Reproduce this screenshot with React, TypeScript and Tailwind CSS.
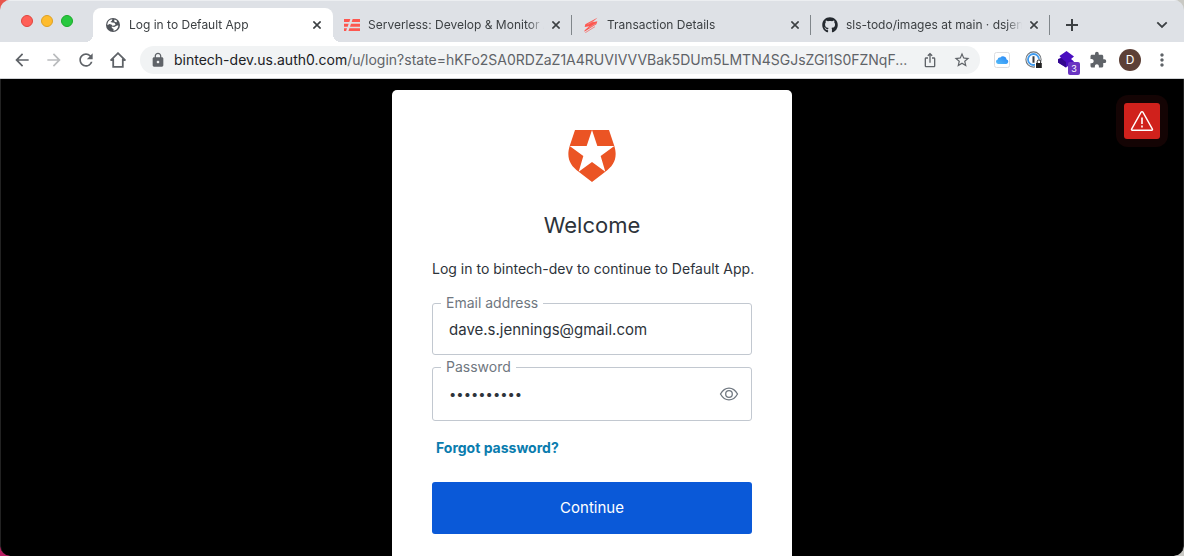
import type { ReactNode } from "react";
import { FaGithub } from "react-icons/fa";
import { MdArrowBack, MdArrowForward, MdRefresh, MdLock, MdExtension, MdMoreVert, MdIosShare, MdStarBorder } from "react-icons/md";

function GlobeIcon() {
  return (
    <svg viewBox="0 0 16 16" className="size-4 shrink-0" aria-hidden="true">
      <circle cx="8" cy="8" r="7" fill="#50545a" />
      <path d="M2.400 8.300C2.200 6 3.200 3.800 5.200 2.700l2.200-.5-.5 1.600L5.400 5l1.800.6 2.200.2 1.200 1.700-1.200 1.100-2 .1-1-1.300-2-.3zM9.600 2.600l2.400 1.100-.3 1.600-1.700-.4-.9-1zM6.600 9.600l2.600.5 2.800-1.500 1.400-.2c-.1 2.100-1.600 4.200-3.600 5l-1.400.3.2-1.700-1.700-.9z" fill="#fff" />
    </svg>
  );
}

function ServerlessIcon() {
  return (
    <svg viewBox="0 0 48 38" className="w-4 shrink-0" fill="#fd5750" aria-hidden="true">
      <path d="M0 0h19l-3 9H0zM26 0h22v9H23zM0 14h14l-3 9H0zM21 14h27v9H18zM0 28h9l-3 9H0zM16 28h32v9H13z" />
    </svg>
  );
}

function BoltIcon() {
  return (
    <svg viewBox="0 0 48 48" className="size-4 shrink-0" fill="#fd5750" aria-hidden="true">
      <path d="M43 2 7 22l-2 8 14-2L5 40l-1 4 36-22 3-9-14 3z" />
      <path d="M7 47 36 29" stroke="#fd5750" strokeWidth="2" />
      <path d="M14 22 38 9M18 32l20-12" stroke="#dee1e6" strokeWidth="1" />
    </svg>
  );
}

function CloseIcon() {
  return (
    <svg viewBox="0 0 8 8" className="size-2" stroke="#3c4043" strokeWidth="1.6" aria-hidden="true">
      <path d="m.4.4 7.2 7.2M7.6.4.4 7.6" />
    </svg>
  );
}

function HomeIcon() {
  return (
    <svg viewBox="0 0 16 16" className="size-4" fill="none" stroke="#5f6368" strokeWidth="1.8" aria-hidden="true">
      <path d="M.9 8.2 8 1.2l7.1 7M3.2 6.8v8.1h9.6V6.8" strokeLinejoin="miter" />
      <path d="M.4 8.3h2.8M12.8 8.3h2.8" strokeWidth="1.4" />
    </svg>
  );
}

function CloudIcon() {
  return (
    <svg viewBox="0 0 16 16" className="size-4" aria-hidden="true">
      <defs>
        <linearGradient id="cloud" x1="0" x2="1" y1="1" y2="0">
          <stop offset="0" stopColor="#56bdf9" />
          <stop offset="1" stopColor="#2584f5" />
        </linearGradient>
      </defs>
      <rect x=".5" y=".5" width="15" height="15" rx="2" fill="#fff" stroke="#dcdde0" />
      <path d="M4 12a2.300 2.300 0 0 1-.3-4.500 2.100 2.100 0 0 1 2.600-1.900 3.600 3.600 0 0 1 6.300 1.900A2.300 2.300 0 0 1 12.300 12z" fill="url(#cloud)" />
    </svg>
  );
}

function OnePasswordIcon() {
  return (
    <svg viewBox="0 0 18 18" className="size-[18px]" aria-hidden="true">
      <circle cx="8.5" cy="8.5" r="7.6" fill="#fff" stroke="#70757a" strokeWidth="1.1" />
      <circle cx="8.5" cy="8.5" r="5.5" fill="none" stroke="#3f9bef" strokeWidth="1.8" />
      <path d="M8.5 5.3v6.4" stroke="#3a3d42" strokeWidth="2" />
      <path d="M10 10.8h.6V10a2.3 2.3 0 0 1 4.6 0v.8h2V18H10z" fill="#fff" />
      <path d="M11 12h5.8v5H11z" fill="#222" />
      <path d="M12.2 12.2v-1.6a1.7 1.7 0 0 1 3.4 0v1.6" fill="none" stroke="#222" />
    </svg>
  );
}

function LayersIcon() {
  return (
    <svg viewBox="0 0 18 18" className="size-[18px]" aria-hidden="true">
      <path d="m9.500 0 7.500 5.500-3 2.500 3 2.500L9 16.500 1 11.500V8l3-1-1.500-2z" fill="#4a0fc0" />
      <path d="M1 8.500 4 7l5 4v5.500l-8-5z" fill="#33078f" />
    </svg>
  );
}

function ShieldLogo() {
  return (
    <svg viewBox="0 0 144 156" className="w-12" role="img" aria-label="bintech-dev">
      <path d="M21 0h102l16 48c11 36-2 60-27 77l-40 31-40-31C7 108-6 84 5 48z" fill="#eb5424" />
      <path d="m72 0 16 48h51L98 78l14 47-40-29-40 29 14-47L5 48h51z" fill="#fff" />
    </svg>
  );
}

function EyeIcon() {
  return (
    <svg viewBox="0 0 20 16" className="w-5" fill="none" stroke="#6f7780" strokeWidth="1.3" aria-hidden="true">
      <path d="M1.5 8C3.6 4.2 6.5 2.1 10 2.1S16.400 4.200 18.500 8c-2.100 3.800-5 5.900-8.500 5.900S3.600 11.800 1.500 8z" />
      <circle cx="10" cy="8" r="3.3" />
    </svg>
  );
}

function WarningIcon() {
  return (
    <svg viewBox="0 0 24 24" className="size-6" fill="none" stroke="#fff" strokeWidth="1.4" aria-hidden="true">
      <path d="M11.100 3.200 1.600 20.100c-.3.600 0 1.200.7 1.200h19.400c.7 0 1-.6.700-1.200L12.900 3.200c-.4-.7-1.400-.7-1.800 0z" />
      <path d="M12 8.500v6.500M12 16.600v1.800" strokeWidth="1.600" />
    </svg>
  );
}

type TabProps = { title: string; icon: ReactNode; active?: boolean };

function Tab({ title, icon, active }: TabProps) {
  return (
    <div
      className={
        active
          ? "relative flex min-w-0 flex-1 items-center rounded-t-lg bg-white pr-3 pl-3 before:absolute before:bottom-0 before:-left-2 before:size-2 before:bg-[radial-gradient(circle_at_0_0,transparent_8px,white_8px)] after:absolute after:-right-2 after:bottom-0 after:size-2 after:bg-[radial-gradient(circle_at_100%_0,transparent_8px,white_8px)]"
          : "flex min-w-0 flex-1 items-center px-[11px]"
      }
    >
      <button type="button" role="tab" aria-selected={!!active} className="flex min-w-0 flex-1 items-center gap-2 text-left text-xs text-[#3c4043]">
        {icon}
        <span className="min-w-0 flex-1 overflow-hidden whitespace-nowrap [mask-image:linear-gradient(to_right,black_calc(100%-16px),transparent)]">{title}</span>
      </button>
      <button type="button" aria-label={`Close ${title}`} className="flex w-4 shrink-0 items-center justify-end">
        <CloseIcon />
      </button>
    </div>
  );
}

function Divider() {
  return <div className="h-5 w-px shrink-0 self-center bg-[#80868b]" />;
}

function ToolButton({ label, children }: { label: string; children: ReactNode }) {
  return (
    <button type="button" aria-label={label} className="flex h-7 w-8 shrink-0 items-center justify-center text-[#5f6368]">
      {children}
    </button>
  );
}

function BrowserChrome() {
  return (
    <header className="shrink-0">
      <div className="flex h-[42px] items-stretch border-t border-[#eceef1] bg-[#dee1e6] pt-[7px]">
        <div className="flex w-[93px] shrink-0 items-start gap-2 pt-[7px] pl-[21px]">
          <button type="button" aria-label="Close window" className="size-3 rounded-full border border-[#e0443e] bg-[#ff5f57]" />
          <button type="button" aria-label="Minimise window" className="size-3 rounded-full border border-[#dea123] bg-[#febc2e]" />
          <button type="button" aria-label="Zoom window" className="size-3 rounded-full border border-[#1aab29] bg-[#28c840]" />
        </div>
        <div role="tablist" className="flex max-w-[957px] min-w-0 flex-1">
          <Tab active title="Log in to Default App" icon={<GlobeIcon />} />
          <Tab title="Serverless: Develop & Monitor A" icon={<ServerlessIcon />} />
          <Divider />
          <Tab title="Transaction Details" icon={<BoltIcon />} />
          <Divider />
          <Tab title="sls-todo/images at main · dsjen" icon={<FaGithub className="size-4 shrink-0 text-[#24292f]" />} />
          <Divider />
        </div>
        <button type="button" aria-label="New tab" className="ml-2 flex w-7 shrink-0 items-center justify-center">
          <svg viewBox="0 0 12 12" className="size-3" stroke="#3c4043" strokeWidth="2" aria-hidden="true">
            <path d="M6 0v12M0 6h12" />
          </svg>
        </button>
        <button type="button" aria-label="Search tabs" className="mr-2 ml-auto flex w-7 shrink-0 items-center justify-center">
          <svg viewBox="0 0 12 8" className="w-3" fill="none" stroke="#3c4043" strokeWidth="1.8" aria-hidden="true">
            <path d="m1.300 1.300 4.700 4.700 4.700-4.700" />
          </svg>
        </button>
      </div>
      <div className="flex h-[37px] items-center border-b border-[#d0d2d5] bg-white px-[6px]">
        <ToolButton label="Back"><MdArrowBack className="size-5" /></ToolButton>
        <ToolButton label="Forward"><MdArrowForward className="size-5 text-[#babcbe]" /></ToolButton>
        <ToolButton label="Reload"><MdRefresh className="size-5" /></ToolButton>
        <ToolButton label="Home"><HomeIcon /></ToolButton>
        <div className="mx-[6px] flex h-7 min-w-0 flex-1 items-center rounded-full bg-[#f1f3f4] pr-[2px] pl-[10px]">
          <MdLock className="size-4 shrink-0 text-[#5f6368]" />
          <div className="ml-2 min-w-0 flex-1 truncate text-sm text-[#5f6368]">
            <span className="text-[#202124]">bintech-dev.us.auth0.com</span>/u/login?state=hKFo2SA0RDZaZ1A4RUVIVVVBak5DUm5LMTN4SGJsZGl1S0FZNqF...
          </div>
          <div className="flex">
            <ToolButton label="Share"><MdIosShare className="size-4" /></ToolButton>
            <ToolButton label="Bookmark"><MdStarBorder className="size-[18px]" /></ToolButton>
          </div>
        </div>
        <ToolButton label="iCloud"><CloudIcon /></ToolButton>
        <ToolButton label="1Password"><OnePasswordIcon /></ToolButton>
        <div className="relative">
          <ToolButton label="Layers"><LayersIcon /></ToolButton>
          <span className="absolute right-[2px] -bottom-px flex h-[13px] w-3 items-center justify-center rounded-[2px] bg-[#6a35c2] text-[9px] leading-none text-white">3</span>
        </div>
        <ToolButton label="Extensions"><MdExtension className="size-[18px]" /></ToolButton>
        <ToolButton label="Profile">
          <span className="flex size-[22px] items-center justify-center rounded-full bg-[#5d4037] text-xs leading-none text-white">D</span>
        </ToolButton>
        <ToolButton label="Menu"><MdMoreVert className="size-5" /></ToolButton>
      </div>
    </header>
  );
}

function LoginCard() {
  return (
    <section className="w-[400px] max-w-full shrink-0 rounded-[5px] bg-white px-10 pt-10 pb-10 text-[#2d333a]">
      <div className="flex justify-center"><ShieldLogo /></div>
      <h1 className="mt-[25px] text-center text-[22px] leading-9">Welcome</h1>
      <p className="mt-4 text-center text-sm leading-5 whitespace-nowrap">Log in to bintech-dev to continue to Default App.</p>
      <form className="mt-6" onSubmit={(e) => e.preventDefault()}>
        <div className="relative">
          <label htmlFor="email" className="absolute -top-[10px] left-[9px] bg-white px-[5px] text-sm leading-5 text-[#6f7780]">Email address</label>
          <input id="email" type="email" defaultValue="dave.s.jennings@gmail.com" className="h-13 w-full rounded-[3px] border border-[#c2c8d0] px-4 text-[15px] outline-none" />
        </div>
        <div className="relative mt-3">
          <label htmlFor="password" className="absolute -top-[10px] left-[9px] bg-white px-[5px] text-sm leading-5 text-[#6f7780]">Password</label>
          <input id="password" type="password" defaultValue="abcdefghij" className="h-[54px] w-full rounded-[3px] border border-[#c2c8d0] pr-12 pl-4 text-[13px] outline-none" />
          <button type="button" aria-label="Show password" className="absolute inset-y-0 right-[13px] flex items-center"><EyeIcon /></button>
        </div>
        <a href="#forgot" className="mt-[17px] ml-1 block w-fit text-sm leading-5 font-bold text-[#0a7cae]">Forgot password?</a>
        <button type="submit" className="mt-6 h-13 w-full rounded-[3px] bg-[#0a59d8] text-[15px] text-white">Continue</button>
      </form>
      <p className="mt-[18px] ml-1 text-sm leading-5">
        Don't have an account? <a href="#signup" className="font-bold text-[#0a7cae]">Sign up</a>
      </p>
    </section>
  );
}

export default function App() {
  return (
    <div className="h-screen overflow-hidden bg-[linear-gradient(to_right,transparent_50%,#c9c9c4_50%),linear-gradient(#e8554c,#b81e62)] font-['Inter','Liberation_Sans',sans-serif]">
      <div className="flex h-full flex-col overflow-hidden rounded-[10px]">
        <BrowserChrome />
        <main className="relative flex min-h-0 flex-1 items-start justify-center overflow-hidden rounded-b-[10px] border-x border-[#222] bg-black pt-[11px]">
          <LoginCard />
          <div className="absolute top-4 right-[15px] rounded-xl bg-[#140404] p-2">
            <button type="button" aria-label="Development keys warning" className="flex size-9 items-center justify-center rounded-[3px] bg-[#d0211c]">
              <WarningIcon />
            </button>
          </div>
        </main>
      </div>
    </div>
  );
}
